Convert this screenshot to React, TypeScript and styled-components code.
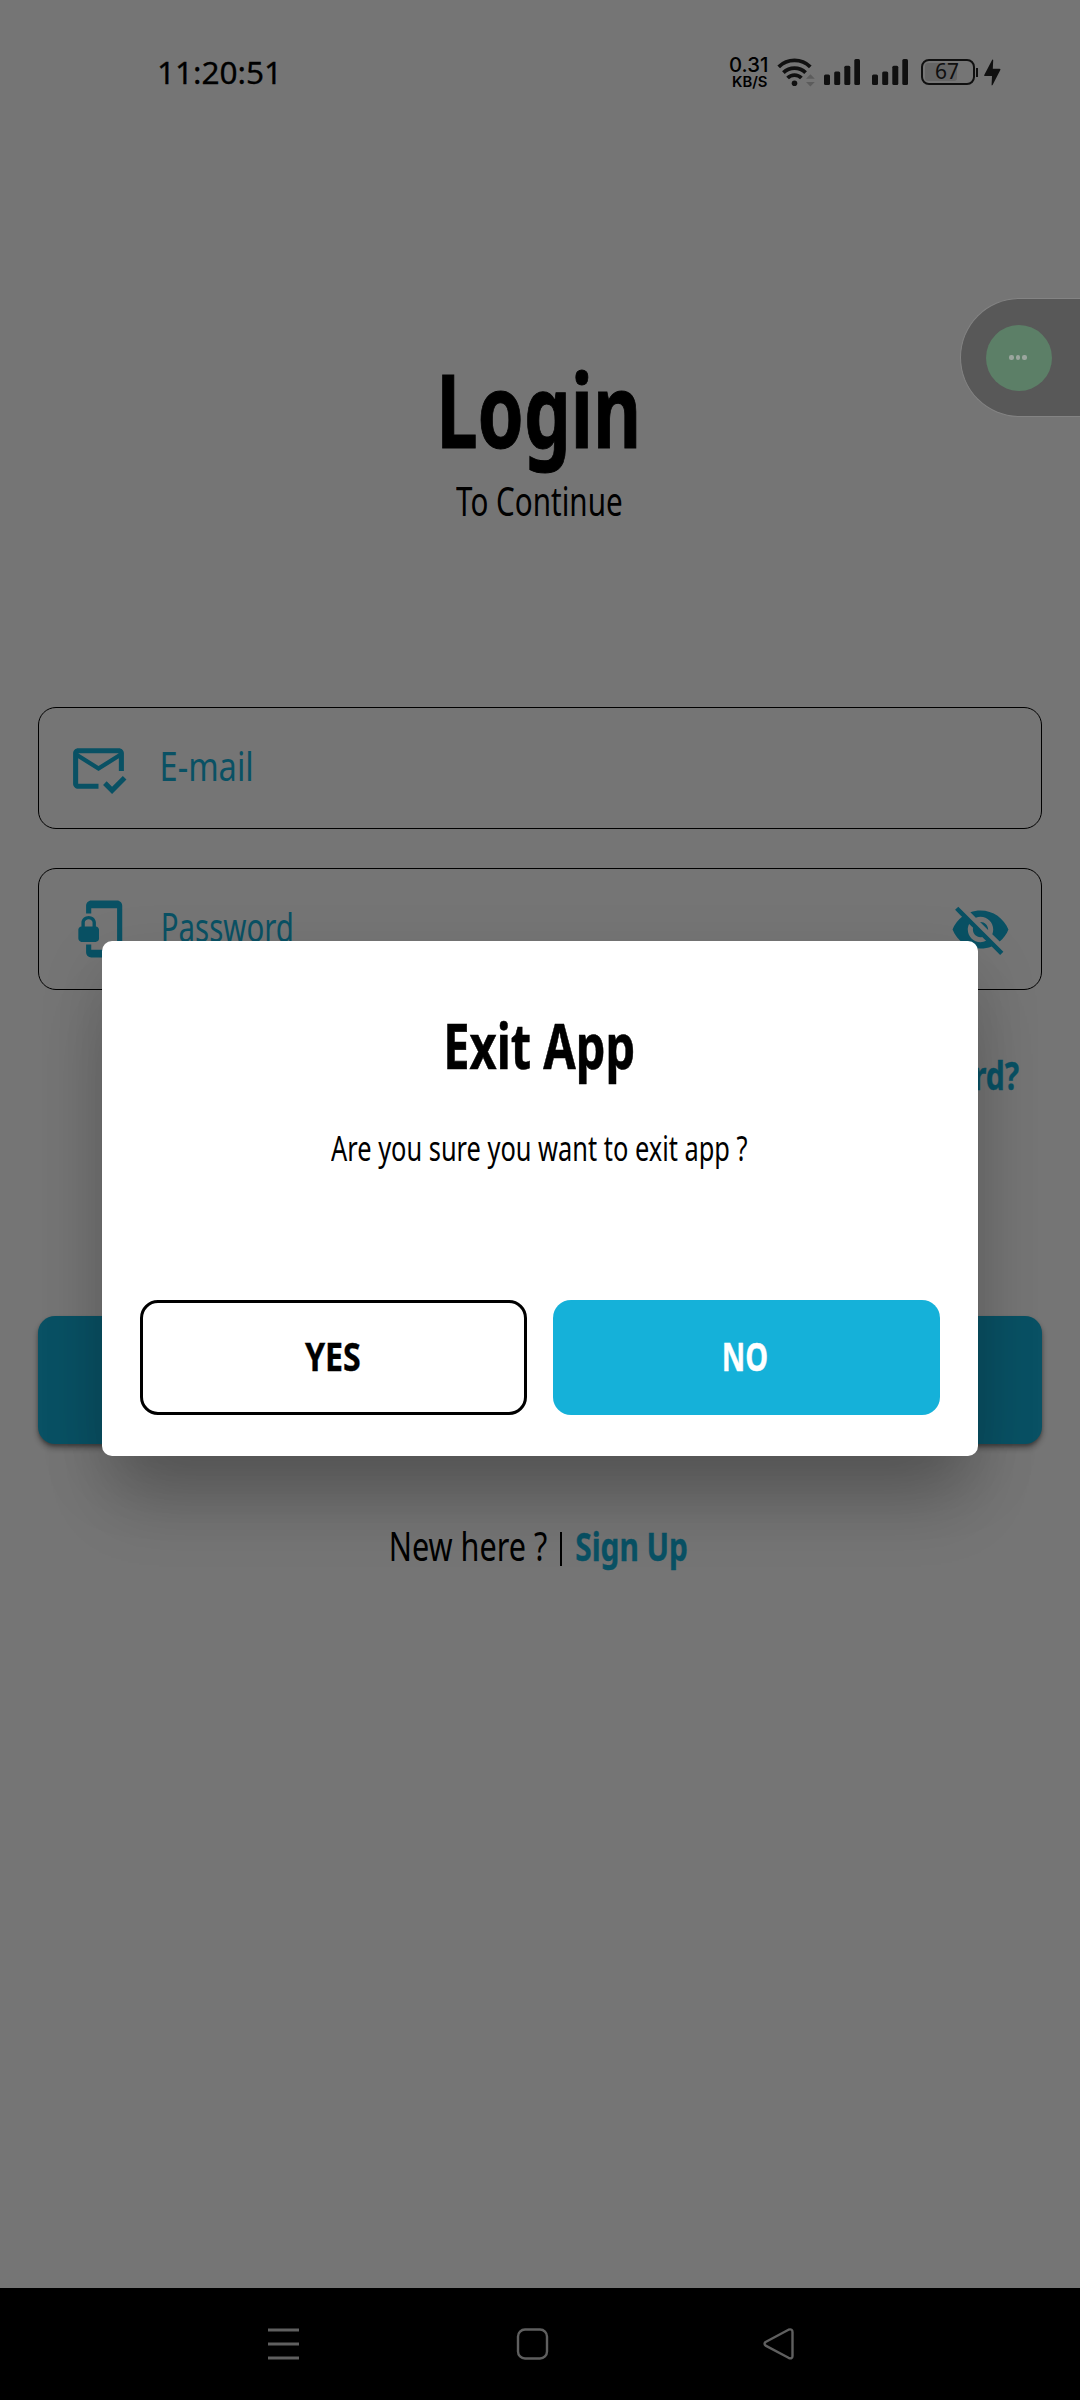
import React, { useLayoutEffect, useRef, useState } from 'react';
import styled, { createGlobalStyle } from 'styled-components';
import { MdOutlineMarkEmailRead, MdPhonelinkLock, MdVisibilityOff } from 'react-icons/md';

const accent = '#15b1d9';

const GlobalStyle = createGlobalStyle`
  * { box-sizing: border-box; }
  body { margin: 0; background: #fff; }
`;

const Screen = styled.div`
  position: relative;
  width: 1080px;
  height: 2400px;
  overflow: hidden;
  display: flex;
  flex-direction: column;
  background: #fff;
  color: #000;
  font-family: 'Noto Sans', sans-serif;
`;

/* Text squeezed horizontally so that its ink fills exactly $width pixels. */
const FitBox = styled.span<{ $width: number; $size: number; $weight: number; $ui?: boolean; $line?: number; $stroke?: number }>`
  display: block;
  flex: none;
  width: ${(p) => p.$width}px;
  font-size: ${(p) => p.$size}px;
  line-height: ${(p) => p.$line ?? Math.round(p.$size * 1.2)}px;
  font-weight: ${(p) => p.$weight};
  font-family: ${(p) => (p.$ui ? "'Inter', sans-serif" : "'Noto Sans', sans-serif")};
  font-variant-ligatures: none;
  -webkit-text-stroke: ${(p) => p.$stroke ?? 0}px currentColor;
  white-space: nowrap;
`;

const FitInner = styled.span`
  display: inline-block;
  vertical-align: top;
  transform-origin: 0 0;
`;

type FitProps = { text: string; width: number; size: number; weight?: number; ui?: boolean; line?: number; stroke?: number };

function Fit({ text, width, size, weight = 400, ui, line, stroke }: FitProps) {
  const ref = useRef<HTMLSpanElement>(null);
  const [transform, setTransform] = useState('none');
  useLayoutEffect(() => {
    const ctx = document.createElement('canvas').getContext('2d');
    if (!ctx || !ref.current) return;
    const style = getComputedStyle(ref.current);
    ctx.font = `${style.fontWeight} ${style.fontSize} ${style.fontFamily}`;
    const m = ctx.measureText(text);
    const scale = width / (m.actualBoundingBoxLeft + m.actualBoundingBoxRight);
    setTransform(`translateX(${m.actualBoundingBoxLeft * scale}px) scaleX(${scale})`);
  }, [text, width]);
  return (
    <FitBox $width={width} $size={size} $weight={weight} $ui={ui} $line={line} $stroke={stroke}>
      <FitInner ref={ref} style={{ transform }}>{text}</FitInner>
    </FitBox>
  );
}

const StatusBar = styled.header`
  height: 144px;
  flex: none;
  display: flex;
  align-items: center;
  justify-content: space-between;
  padding: 0 79px 0 159px;
`;

const StatusIcons = styled.div`
  display: flex;
  align-items: center;
  color: #242424;
`;

const Speed = styled.div`
  display: flex;
  flex-direction: column;
  align-items: flex-end;
  color: #000;
  margin-right: 10px;
`;

const Glyph = styled.svg<{ $gap?: number }>`
  display: block;
  flex: none;
  margin-right: ${(p) => p.$gap ?? 0}px;
`;

const Battery = styled.div`
  position: relative;
  width: 54px;
  height: 26px;
  padding: 2px;
  border: 2px solid #242424;
  border-radius: 8px;
`;

const Charge = styled.div`
  width: 32px;
  height: 18px;
  border-radius: 3px;
  background: #dcdcdc;
`;

const BatteryLabel = styled.div`
  position: absolute;
  left: 13px;
  top: -2px;
`;

const Nub = styled.div`
  width: 2px;
  height: 9px;
  background: #242424;
  margin: 0 6px 0 1px;
`;

const Heading = styled.section`
  display: flex;
  flex-direction: column;
  align-items: center;
  gap: 7px;
  margin: 204px 0 182px;
  padding-right: 2px;
`;

const Form = styled.form`
  display: flex;
  flex-direction: column;
  padding: 0 38.5px 0 38px;
  color: ${accent};
`;

const Field = styled.div`
  height: 122px;
  margin-bottom: 39px;
  border: 1.5px solid #000;
  border-radius: 18px;
  display: flex;
  align-items: center;
  padding: 0 30px 0 29px;
`;

const FieldLabel = styled.div`
  flex: 1;
  padding: 0 0 5px 33px;
`;

const Forgot = styled.div`
  display: flex;
  justify-content: flex-end;
  padding-right: 23px;
  margin: 22px 0 217px;
`;

const Submit = styled.div`
  height: 128px;
  border-radius: 17px;
  background: ${accent};
  box-shadow: 0 4px 6px rgba(0, 0, 0, 0.35), 0 2px 3px rgba(0, 0, 0, 0.2);
`;

const SignUpRow = styled.div`
  display: flex;
  margin-top: 78px;
  padding-left: 391px;
  color: #000;
`;

const Divider = styled.div`
  width: 2px;
  height: 34px;
  margin: 10px 14px 0 13px;
  background: #000;
`;

const Accent = styled.div`
  color: ${accent};
`;

const NavBar = styled.nav`
  margin-top: auto;
  height: 112px;
  flex: none;
  background: #000;
  display: flex;
  align-items: center;
  padding-left: 267px;
`;

const Barrier = styled.div`
  position: absolute;
  inset: 0;
  background: rgba(0, 0, 0, 0.54);
  display: flex;
  justify-content: center;
  align-items: flex-start;
  padding-top: 941px;
`;

const Dialog = styled.div`
  width: 876px;
  height: 515px;
  border-radius: 10px;
  background: #fff;
  padding: 66px 38px 0;
  display: flex;
  flex-direction: column;
  align-items: center;
  box-shadow: 0 56px 66px -14px rgba(0, 0, 0, 0.2), 0 24px 66px 0 rgba(0, 0, 0, 0.13);
`;

const Message = styled.div`
  margin: 45px 0 131px;
  padding-right: 2px;
`;

const Actions = styled.div`
  align-self: stretch;
  display: grid;
  grid-template-columns: 1fr 1fr;
  gap: 26px;
`;

const Action = styled.button<{ $primary?: boolean }>`
  height: 115px;
  padding: 0 2px 4px 0;
  display: flex;
  align-items: center;
  justify-content: center;
  border-radius: 18px;
  border: ${(p) => (p.$primary ? '0' : '3px solid #000')};
  background: ${(p) => (p.$primary ? accent : '#fff')};
  color: ${(p) => (p.$primary ? '#fff' : '#000')};
`;

const Assist = styled.div`
  position: absolute;
  top: 298px;
  right: 0;
  width: 120px;
  height: 119px;
  padding-left: 25px;
  border: 1.5px solid #838383;
  border-right: 0;
  border-radius: 60px 0 0 60px;
  background: #585858;
  display: flex;
  align-items: center;
`;

const AssistDot = styled.div`
  width: 66px;
  height: 66px;
  border-radius: 50%;
  background: #5c7f67;
  display: flex;
  align-items: center;
  justify-content: center;
  gap: 2.4px;
  padding-right: 2px;
`;

const Pip = styled.i`
  width: 4.2px;
  height: 4.2px;
  border-radius: 50%;
  background: #9ba69e;
`;

const Signal = ({ gap }: { gap: number }) => (
  <Glyph $gap={gap} width="36" height="26" viewBox="0 0 36 26" fill="currentColor">
    <rect x="0" y="15.5" width="6" height="10.5" rx="1.5" />
    <rect x="10.2" y="12.5" width="6" height="13.5" rx="1.5" />
    <rect x="20.3" y="6.8" width="6" height="19.2" rx="1.5" />
    <rect x="30.3" y="0" width="5.7" height="26" rx="1.5" />
  </Glyph>
);

export default function App() {
  return (
    <Screen>
      <GlobalStyle />
      <StatusBar>
        <Fit text="11:20:51" width={116.5} size={30.5} stroke={0.3} />
        <StatusIcons>
          <Speed>
            <Fit text="0.31" width={37} size={20} weight={500} line={18} ui />
            <Fit text="KB/S" width={34} size={14.5} weight={600} line={15} ui />
          </Speed>
          <Glyph $gap={8} width="39" height="30" viewBox="0 0 39 30" fill="none" stroke="currentColor" strokeWidth="3.8">
            <path d="M1.7 9.8a22.5 22.5 0 0 1 31.6 0" />
            <path d="M6.4 15.6a16 16 0 0 1 22.2 0" />
            <path d="M10.6 21a9.6 9.6 0 0 1 13.8 0" />
            <circle cx="17.5" cy="26.3" r="2.8" fill="currentColor" stroke="none" />
            <path d="M29 21.8l4.4-4.6 4.4 4.6zM29 25l4.4 4.4L37.8 25z" fill="#c8c8c8" stroke="none" />
          </Glyph>
          <Signal gap={12} />
          <Signal gap={13} />
          <Battery>
            <Charge />
            <BatteryLabel>
              <Fit text="67" width={22} size={21} />
            </BatteryLabel>
          </Battery>
          <Nub />
          <Glyph width="17" height="27" viewBox="0 0 17 27" fill="currentColor">
            <path d="M8.2.8Q9.3 0 9.2 1.5L8.8 9.8H15.5Q17 9.8 16.2 11.2L8.6 26Q7.5 27 7.6 25.5L8 17H1Q-.3 17 .5 15.6Z" />
          </Glyph>
        </StatusIcons>
      </StatusBar>

      <Heading>
        <Fit text="Login" width={194.5} size={102} weight={700} stroke={1} />
        <Fit text="To Continue" width={165.5} size={40} />
      </Heading>

      <Form>
        <Field>
          <MdOutlineMarkEmailRead size={61} />
          <FieldLabel><Fit text="E-mail" width={89} size={40} /></FieldLabel>
        </Field>
        <Field>
          <MdPhonelinkLock size={62} />
          <FieldLabel><Fit text="Password" width={129} size={40} /></FieldLabel>
          <MdVisibilityOff size={61} />
        </Field>
        <Forgot>
          <Fit text="Forgot Password?" width={262} size={40} weight={700} stroke={0.4} />
        </Forgot>
        <Submit />
      </Form>
      <SignUpRow>
        <Fit text="New here ?" width={156} size={40} />
        <Divider />
        <Accent><Fit text="Sign Up" width={111} size={40} weight={700} stroke={0.4} /></Accent>
      </SignUpRow>

      <NavBar>
        <Glyph $gap={216} width="33" height="32" viewBox="0 0 33 32" stroke="#cfcfcf" strokeWidth="3">
          <path d="M1 2h31M1 16h31M1 30h31" />
        </Glyph>
        <Glyph $gap={214} width="33" height="32" viewBox="0 0 33 32" fill="none" stroke="#cfcfcf" strokeWidth="2.4">
          <rect x="2" y="1.5" width="29" height="29" rx="7" />
        </Glyph>
        <Glyph width="33" height="32" viewBox="0 0 33 32" fill="none" stroke="#cfcfcf" strokeWidth="2.4" strokeLinejoin="round">
          <path d="M2.6 14L25.5 1.7Q29.5.5 29.5 4V28Q29.5 31.5 25.5 29.8L2.6 17.6Q.5 15.8 2.6 14Z" />
        </Glyph>
      </NavBar>

      <Barrier>
        <Dialog>
          <Fit text="Exit App" width={186} size={63} weight={700} stroke={0.6} />
          <Message>
            <Fit text="Are you sure you want to exit app ?" width={416} size={34} />
          </Message>
          <Actions>
            <Action><Fit text="YES" width={55} size={40} weight={700} stroke={0.4} /></Action>
            <Action $primary><Fit text="NO" width={43} size={40} weight={700} stroke={0.4} /></Action>
          </Actions>
        </Dialog>
      </Barrier>

      <Assist>
        <AssistDot><Pip /><Pip /><Pip /></AssistDot>
      </Assist>
    </Screen>
  );
}
